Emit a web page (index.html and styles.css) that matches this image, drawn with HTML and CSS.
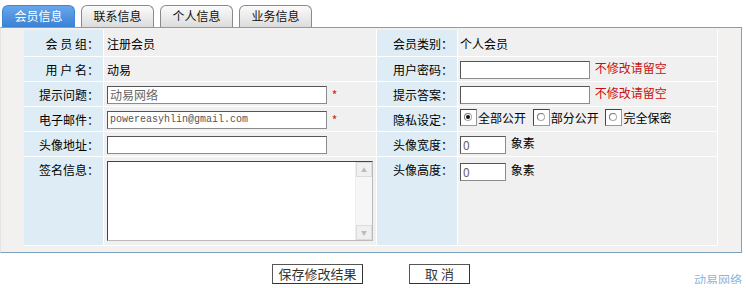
FILE: index.html
```html
<!doctype html>
<html lang="zh-CN">
    <head>
        <meta charset="utf-8">
        <title>修改会员信息</title>
        <link rel="stylesheet" href="styles.css">
    </head>
    <body>
        <div class="tabs">
            <span class="tab active">会员信息</span>
            <span class="tab">联系信息</span>
            <span class="tab">个人信息</span>
            <span class="tab">业务信息</span>
        </div>
        <div class="panel">
            <table class="form" cellspacing="0" cellpadding="0">
                <tr class="first">
                    <td class="lbl">会 员 组：</td>
                    <td class="val">注册会员</td>
                    <td class="lbl">会员类别：</td>
                    <td class="val">个人会员</td>
                </tr>
                <tr>
                    <td class="lbl">用 户 名：</td>
                    <td class="val">动易</td>
                    <td class="lbl">用户密码：</td>
                    <td class="val"><input class="txt short" type="password"> <span class="tip">不修改请留空</span></td>
                </tr>
                <tr>
                    <td class="lbl">提示问题：</td>
                    <td class="val"><input class="txt long" value="动易网络"> <span class="star">*</span></td>
                    <td class="lbl">提示答案：</td>
                    <td class="val"><input class="txt short"> <span class="tip">不修改请留空</span></td>
                </tr>
                <tr>
                    <td class="lbl">电子邮件：</td>
                    <td class="val"><input class="txt long mono" value="powereasyhlin@gmail.com"> <span class="star">*</span></td>
                    <td class="lbl">隐私设定：</td>
                    <td class="val">
                        <label class="radio"><i class="on"></i>全部公开</label>
                        <label class="radio"><i></i>部分公开</label>
                        <label class="radio"><i></i>完全保密</label>
                    </td>
                </tr>
                <tr>
                    <td class="lbl">头像地址：</td>
                    <td class="val"><input class="txt long"></td>
                    <td class="lbl">头像宽度：</td>
                    <td class="val"><input class="txt num" value="0"> <span class="unit">象素</span></td>
                </tr>
                <tr class="tall">
                    <td class="lbl">签名信息：</td>
                    <td class="val">
                        <div class="sign">
                            <textarea></textarea>
                            <div class="sbar">
                                <span class="arrow">▲</span>
                                <span class="arrow">▼</span>
                            </div>
                        </div>
                    </td>
                    <td class="lbl">头像高度：</td>
                    <td class="val"><input class="txt num" value="0"> <span class="unit">象素</span></td>
                </tr>
            </table>
        </div>
        <div class="actions">
            <span></span>
            <div class="buttons">
                <button class="btn save">保存修改结果</button>
                <button class="btn cancel">取 消</button>
            </div>
            <span class="brand">动易网络</span>
        </div>
    </body>
</html>
```

FILE: styles.css
```css
html, body { margin: 0; padding: 0; background: #fff; }
body { font-family: "Noto Sans CJK SC", "DejaVu Sans", sans-serif; font-size: 12px; color: #000; }

/*tabs*/
.tabs { display: flex; gap: 6px; padding: 5px 0 0 2px; height: 22px; }
.tab {
    width: 71px; height: 21px; line-height: 20px;
    text-align: center;
    border: 1px solid #8a8a8a; border-bottom: 0;
    border-radius: 6px 6px 0 0;
    background: linear-gradient(#fbfbfb, #dcdcdc);
    color: #111;
}
.tab.active { background: linear-gradient(#67a6ec, #3a82d4); border-color: #3f86d6; color: #fff; }

/*panel*/
.panel {
    width: 717px;
    border: 1px solid #7aa2bf; border-left-color: #e4e4e4;
    background: #f3f1ef;
    padding: 2px 0 6px 23px;
}
.form { border-collapse: collapse; width: 694px; }
.form td { border: 1px solid #fff; height: 24px; padding: 0; vertical-align: middle; }
.form tr.first td { height: 26px; border-top: 0; }
.form tr.tall td { height: 84px; vertical-align: top; padding-top: 4px; }
.form tr:last-child td { border-bottom: 1px solid #fff; }
.form td:first-child { border-left: 0; }
.form td:last-child { border-right: 1px solid #fff; }
.form .lbl { background: #deedf5; text-align: right; padding-right: 4px; white-space: pre; }
.form td.lbl:nth-child(1) { width: 75px; }
.form td.val:nth-child(2) { width: 269px; padding-left: 3px; }
.form td.lbl:nth-child(3) { width: 76px; }
.form td.val:nth-child(4) { padding-left: 2px; }
.form .val { background: #f0f0f0; }

/*fields*/
.txt {
    box-sizing: border-box; height: 18px; margin: 0; padding: 0 2px;
    border: 1px solid #8c8c8c; border-top-color: #555; border-left-color: #555;
    background: #fff; color: #666;
    font-family: "Noto Sans CJK SC", "DejaVu Sans", sans-serif; font-size: 12px;
    vertical-align: middle;
}
.txt.long { width: 220px; }
.txt.short { width: 130px; }
.txt.num { width: 46px; }
.txt.mono { font-family: "Liberation Mono", monospace; font-size: 10px; color: #555; }
.star { color: #d02020; margin-left: 2px; vertical-align: middle; }
.tip { color: #c81010; margin-left: 2px; }
.unit { margin-left: 2px; }

/*textarea with its classic scrollbar*/
.sign {
    display: flex; box-sizing: border-box; width: 266px; height: 80px;
    border: 1px solid #bbb; border-top-color: #444; border-left-color: #444;
    background: #fff;
}
.sign textarea { flex: 1; margin: 0; padding: 2px; border: 0; resize: none; outline: none; }
.sbar {
    width: 16px; display: flex; flex-direction: column; justify-content: space-between;
    background: #f6f6f6; border-left: 1px solid #eee;
}
.arrow {
    height: 15px; box-sizing: border-box; border: 1px solid #dcdcdc; background: #f0f0f0;
    color: #bcbcbc; font-size: 6px; line-height: 13px; text-align: center;
}

/*radios*/
.radio { display: inline-flex; align-items: center; margin-right: 4px; }
.radio i {
    box-sizing: border-box; width: 17px; height: 17px; margin-right: 1px;
    border: 1px solid #999; border-top-color: #444; border-left-color: #444;
    background: #fff; position: relative;
}
.radio i::after {
    content: ""; position: absolute; left: 3px; top: 3px;
    width: 8px; height: 8px; border-radius: 50%;
    border: 1px solid #aaa; border-left-color: #777; border-top-color: #777; box-sizing: border-box;
}
.radio i.on::before {
    content: ""; position: absolute; left: 5px; top: 5px;
    width: 4px; height: 4px; border-radius: 50%; background: #111;
}

/*actions*/
.actions { display: grid; grid-template-columns: 1fr auto 1fr; margin-top: 11px; width: 742px; }
.buttons { display: flex; gap: 46px; }
.btn {
    height: 20px; margin: 0; padding: 0;
    border: 1px solid #555; border-right-color: #333; border-bottom-color: #333;
    background: #fff; color: #333;
    font-family: "Noto Sans CJK SC", "DejaVu Sans", sans-serif; font-size: 13px; line-height: 18px;
}
.btn.save { width: 91px; }
.btn.cancel { width: 61px; }
.brand { justify-self: end; align-self: end; color: #8db8dc; font-size: 12px; line-height: 14px; margin-bottom: -3px; }
```
